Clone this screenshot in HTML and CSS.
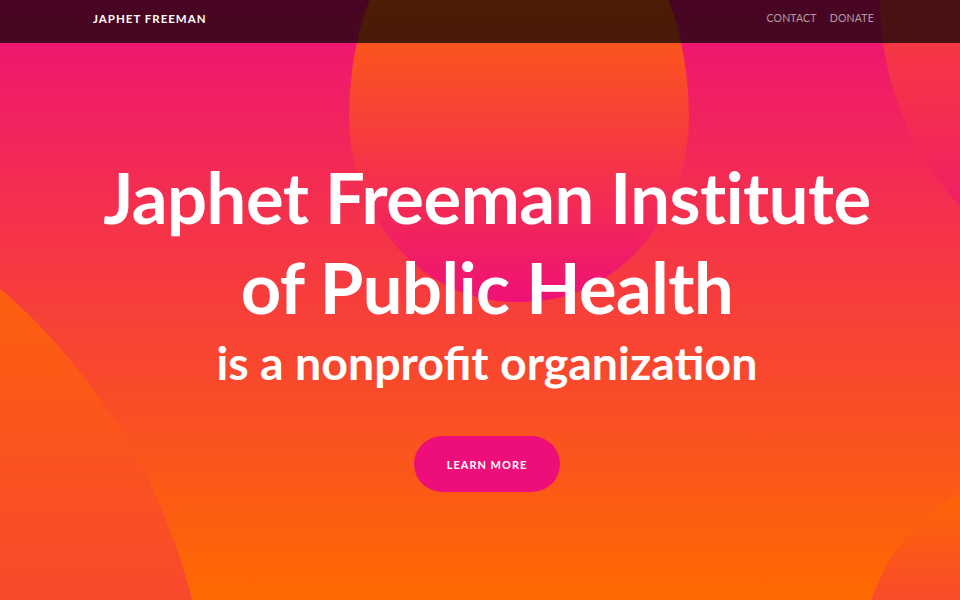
FILE: index.html
```html
<!DOCTYPE html>
<html lang="en">
<head>
<meta charset="utf-8">
<title>Japhet Freeman Institute of Public Health</title>
<link rel="stylesheet" href="styles.css">
</head>
<body>
<div class="hero">
  <div class="bubble bubble-top"></div>
  <div class="bubble bubble-right"></div>
  <div class="bubble bubble-left"></div>
  <div class="bubble bubble-corner"></div>
  <header class="nav">
    <a class="brand" href="#">JAPHET FREEMAN</a>
    <nav class="links">
      <a href="#">CONTACT</a>
      <a href="#">DONATE</a>
    </nav>
  </header>
  <main class="content">
    <h1 class="title">Japhet Freeman Institute<br>of Public Health</h1>
    <p class="subtitle">is a nonprofit organization</p>
    <a class="btn" href="#">LEARN MORE</a>
  </main>
</div>
</body>
</html>
```
FILE: styles.css
```css
* { box-sizing: border-box; }
html, body { margin: 0; padding: 0; }
body {
  font-family: "Lato", "Open Sans", sans-serif;
  color: #fff;
}
a { color: inherit; text-decoration: none; }

.hero {
  position: relative;
  height: 600px;
  overflow: hidden;
  background: linear-gradient(to bottom, #ee1177 0%, #ff6a00 100%);
  display: flex;
  flex-direction: column;
}

.bubble {
  position: absolute;
  border-radius: 50%;
  background: linear-gradient(to bottom, #ff6a00 0%, #ee1177 100%);
  z-index: 0;
}
.bubble-top {
  left: 349px; top: -127px; width: 340px; height: 429px;
  border-radius: 170px 170px 170px 170px / 250px 250px 189px 189px;
  background: linear-gradient(to bottom, #ff7000 0%, #ff6a00 20%, #ee1177 100%);
}
.bubble-right { left: 880px; top: -308px; width: 616px; height: 616px; }
.bubble-left { left: -1011px; top: 139px; width: 1222px; height: 1222px; }
.bubble-corner { left: 863px; top: 473px; width: 364px; height: 364px; }

.nav {
  position: relative;
  z-index: 2;
  height: 43px;
  flex: none;
  display: flex;
  align-items: center;
  justify-content: space-between;
  padding: 0 86px 7px 93px;
  background: rgba(0, 0, 0, 0.7);
}
.brand {
  font-size: 11.5px;
  font-weight: 700;
  letter-spacing: 1px;
  color: #fff;
}
.links { display: flex; gap: 13px; }
.links a {
  font-size: 10.5px;
  font-weight: 400;
  letter-spacing: 0.2px;
  color: rgba(255, 255, 255, 0.6);
}

.content {
  position: relative;
  z-index: 1;
  display: flex;
  flex-direction: column;
  align-items: center;
  text-align: center;
  padding-top: 109px;
  padding-left: 14px;
}
.title {
  margin: 0;
  font-size: 70.5px;
  font-weight: 700;
  line-height: 90px;
  letter-spacing: -0.5px;
}
.subtitle {
  margin: 0;
  font-size: 46.5px;
  font-weight: 700;
  line-height: 60px;
}
.btn {
  margin-top: 44px;
  width: 146px;
  height: 56px;
  border-radius: 28px;
  background: #ee0e7a;
  display: flex;
  align-items: center;
  justify-content: center;
  font-size: 11px;
  font-weight: 700;
  letter-spacing: 1px;
}
```
